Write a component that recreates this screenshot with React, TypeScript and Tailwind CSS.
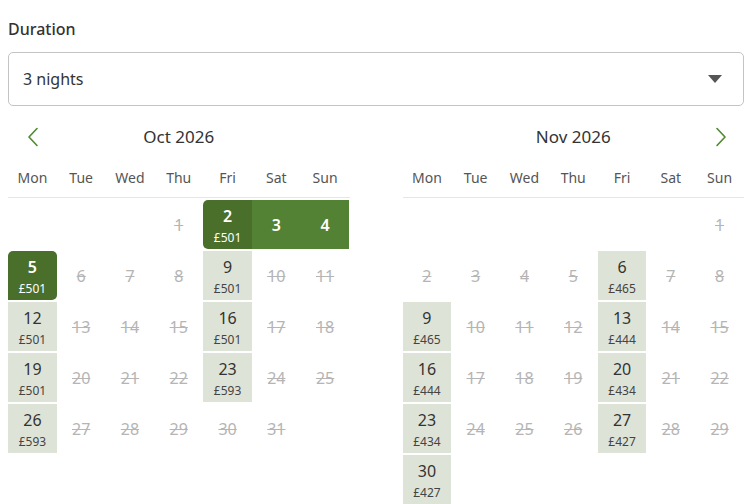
import React from 'react';

type Cell =
  | { kind: 'empty' }
  | { kind: 'off'; day: number }
  | { kind: 'open'; day: number; price: number }
  | { kind: 'start'; day: number; price: number }
  | { kind: 'range'; day: number }
  | { kind: 'end'; day: number; price: number };

const WEEKDAYS = ['Mon', 'Tue', 'Wed', 'Thu', 'Fri', 'Sat', 'Sun'];

// builds a month from the weekday offset and the list of days that have prices
const buildMonth = (offset: number, days: number, prices: Record<number, number>, special: Record<number, Cell> = {}): Cell[] => {
  const cells: Cell[] = [];
  for (let i = 0; i < offset; i++) cells.push({ kind: 'empty' });
  for (let d = 1; d <= days; d++) {
    if (special[d]) cells.push(special[d]);
    else if (prices[d]) cells.push({ kind: 'open', day: d, price: prices[d] });
    else cells.push({ kind: 'off', day: d });
  }
  return cells;
};

const october = buildMonth(
  3,
  31,
  { 9: 501, 12: 501, 16: 501, 19: 501, 23: 593, 26: 593 },
  {
    2: { kind: 'start', day: 2, price: 501 },
    3: { kind: 'range', day: 3 },
    4: { kind: 'range', day: 4 },
    5: { kind: 'end', day: 5, price: 501 },
  }
);

const november = buildMonth(6, 30, { 6: 465, 9: 465, 13: 444, 16: 444, 20: 434, 23: 434, 27: 427, 30: 427 });

const ChevronLeft = () => (
  <svg width="12" height="20" viewBox="0 0 12 20" fill="none">
    <path d="M10 1.5 L2 10 L10 18.5" stroke="#4f8a2f" strokeWidth="1.6" strokeLinecap="round" strokeLinejoin="round" />
  </svg>
);

const ChevronRight = () => (
  <svg width="12" height="20" viewBox="0 0 12 20" fill="none">
    <path d="M2 1.5 L10 10 L2 18.5" stroke="#4f8a2f" strokeWidth="1.6" strokeLinecap="round" strokeLinejoin="round" />
  </svg>
);

const DayCell: React.FC<{ cell: Cell }> = ({ cell }) => {
  switch (cell.kind) {
    case 'empty':
      return <div />;
    case 'off':
      return (
        <div className="flex items-center justify-center text-[16px] text-[#b5b5b5] line-through decoration-[#b5b5b5]">
          {cell.day}
        </div>
      );
    case 'open':
      return (
        <div className="flex flex-col items-center pt-[6px] bg-[#dee3d8] text-[#333]">
          <span className="text-[16px] leading-[20px]">{cell.day}</span>
          <span className="mt-[4px] text-[12px] leading-[16px] text-[#444]">£{cell.price}</span>
        </div>
      );
    case 'start':
      return (
        <div className="flex flex-col items-center pt-[6px] bg-[#4a6f2b] text-white rounded-l-[5px]">
          <span className="text-[16px] leading-[20px] font-semibold">{cell.day}</span>
          <span className="mt-[4px] text-[12px] leading-[16px]">£{cell.price}</span>
        </div>
      );
    case 'end':
      return (
        <div className="flex flex-col items-center pt-[6px] bg-[#4a6f2b] text-white rounded-tl-[5px] rounded-r-[5px]">
          <span className="text-[16px] leading-[20px] font-semibold">{cell.day}</span>
          <span className="mt-[4px] text-[12px] leading-[16px]">£{cell.price}</span>
        </div>
      );
    case 'range':
      return (
        <div className="flex items-center justify-center bg-[#548235] text-white text-[16px] font-semibold">
          {cell.day}
        </div>
      );
  }
};

const Month: React.FC<{ title: string; cells: Cell[]; side: 'left' | 'right' }> = ({ title, cells, side }) => (
  <div>
    <div className="relative flex h-[40px] items-center justify-center">
      {side === 'left' && (
        <button className="absolute left-[19px] top-[10px]" aria-label="Previous month">
          <ChevronLeft />
        </button>
      )}
      <span className="text-[17px] text-[#333]">{title}</span>
      {side === 'right' && (
        <button className="absolute right-[17px] top-[10px]" aria-label="Next month">
          <ChevronRight />
        </button>
      )}
    </div>
    <div className="grid h-[41px] grid-cols-7 items-center border-b border-[#e6e6e6]">
      {WEEKDAYS.map((d) => (
        <span key={d} className="text-center text-[14px] text-[#555]">
          {d}
        </span>
      ))}
    </div>
    <div className="mt-[2px] grid grid-cols-7 auto-rows-[49px] gap-y-[2px]">
      {cells.map((c, i) => (
        <DayCell key={i} cell={c} />
      ))}
    </div>
  </div>
);

export default function App() {
  return (
    <div className="h-[504px] w-[750px] overflow-hidden bg-white pl-2 pr-[6px] pt-[17px] font-['Noto_Sans','Open_Sans',sans-serif] text-[#333]">
      <label className="block text-[16px] leading-[24px] font-medium text-[#333]">Duration</label>
      <div className="mt-[11px] flex h-[54px] items-center justify-between rounded-[5px] border border-[#c4c4c4] pl-[14px] pr-[21px]">
        <span className="text-[16px] text-[#333]">3 nights</span>
        <svg width="14" height="8" viewBox="0 0 14 8">
          <path d="M0 0 L14 0 L7 8 Z" fill="#555" />
        </svg>
      </div>
      <div className="mt-[11px] grid grid-cols-2 gap-x-[53px]">
        <Month title="Oct 2026" cells={october} side="left" />
        <Month title="Nov 2026" cells={november} side="right" />
      </div>
    </div>
  );
}
